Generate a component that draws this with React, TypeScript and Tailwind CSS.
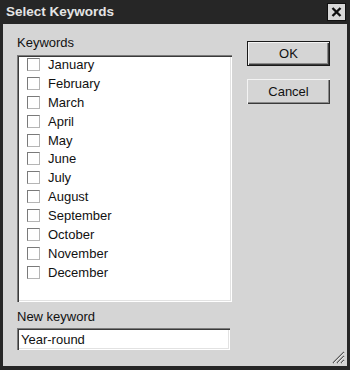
const months = [
  "January",
  "February",
  "March",
  "April",
  "May",
  "June",
  "July",
  "August",
  "September",
  "October",
  "November",
  "December",
];

const sunken =
  "shadow-[inset_1px_1px_0_#7a7a7a,inset_2px_2px_0_#3a3a3a,inset_-1px_-1px_0_#ffffff,inset_-2px_-2px_0_#e2e2e2]";
const raised =
  "shadow-[inset_1px_1px_0_#f4f4f4,inset_-1px_-1px_0_#3a3a3a,inset_-2px_-2px_0_#8a8a8a]";

const App = () => {
  return (
    <div
      className="w-[350px] h-[370px] flex flex-col bg-[#262626] px-[3px] pb-[4px]"
      style={{ fontFamily: '"Liberation Sans", Arial, sans-serif' }}
    >
      {/* title bar */}
      <div className="h-[24px] flex items-center justify-between pl-[3px] pr-[1px] shrink-0">
        <span className="text-[13.5px] font-bold text-[#e4e4e4] leading-none">
          Select Keywords
        </span>
        <div className="w-[19px] h-[18px] bg-[#d8d8d8] border border-[#111] flex items-center justify-center">
          <svg width="11" height="10" viewBox="0 0 11 10">
            <path d="M1.5 1 L9.5 9 M9.5 1 L1.5 9" stroke="#111" strokeWidth="2.4" />
          </svg>
        </div>
      </div>

      {/* body */}
      <div className="flex-1 bg-[#d5d5d5] relative flex">
        <div className="flex flex-col pl-[14px] pt-[11px] w-[232px]">
          <div className="text-[13px] leading-[16px] text-[#111]">Keywords</div>
          <div className={`mt-[4px] w-[215px] h-[247px] bg-white pt-[0px] ${sunken}`}>
            {months.map((m) => (
              <div key={m} className="h-[18.9px] flex items-center pl-[10px] gap-[8px]">
                <span className="w-[13px] h-[13px] bg-white border border-t-[#7a7a7a] border-l-[#7a7a7a] border-r-[#b5b5b5] border-b-[#b5b5b5] shrink-0" />
                <span className="text-[13px] leading-none text-[#111]">{m}</span>
              </div>
            ))}
          </div>
          <div className="mt-[7px] text-[13px] leading-[16px] text-[#111]">New keyword</div>
          <div className={`mt-[3px] w-[213px] h-[22px] bg-white flex items-center pl-[4px] ${sunken}`}>
            <span className="text-[13px] leading-none text-[#111]">Year-round</span>
          </div>
        </div>

        <div className="flex flex-col pt-[17px] pl-[12px] gap-[13px]">
          <div className="w-[83px] h-[25px] border border-[#1a1a1a]">
            <div className={`w-full h-full bg-[#d5d5d5] flex items-center justify-center text-[13px] text-[#111] ${raised}`}>
              OK
            </div>
          </div>
          <div className={`w-[83px] h-[25px] bg-[#d5d5d5] flex items-center justify-center text-[13px] text-[#111] ${raised}`}>
            Cancel
          </div>
        </div>

        {/* resize grip */}
        <svg className="absolute right-[2px] bottom-[2px]" width="14" height="14" viewBox="0 0 14 14">
          <path d="M13 2 L2 13 M13 6 L6 13 M13 10 L10 13" stroke="#5a5a5a" strokeWidth="1.3" />
          <path d="M13 3 L3 13 M13 7 L7 13 M13 11 L11 13" stroke="#f8f8f8" strokeWidth="0.8" />
        </svg>
      </div>
    </div>
  );
};

export default App;
